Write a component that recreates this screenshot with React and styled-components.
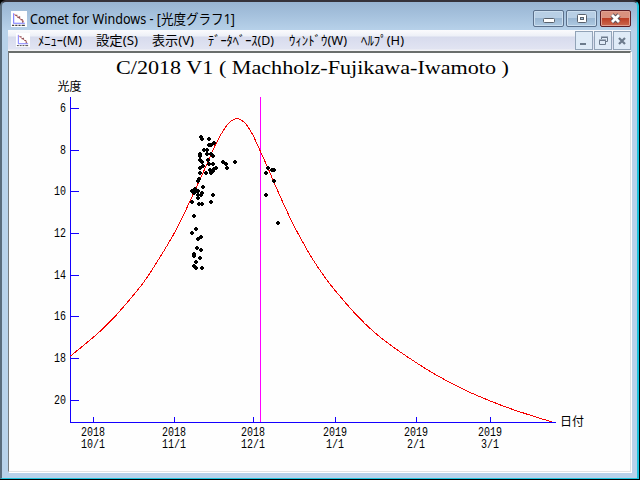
import React from "react";
import styled, { createGlobalStyle } from "styled-components";

const Global = createGlobalStyle`
  * { box-sizing: border-box; }
  body { margin: 0; background: #10141c; overflow: hidden; }
`;

const UI_FONT = `"Noto Sans", "Noto Sans CJK JP", sans-serif`;

const Desktop = styled.div`
  width: 640px;
  height: 480px;
  background: #000;
  padding: 0 1px 1px 0;
`;
const Frame = styled.div`
  width: 639px;
  height: 479px;
  display: flex;
  flex-direction: column;
  padding: 0 6px 6px 6px;
  border: 1px solid #1fc3dc;
  border-width: 2px 2px 1px 2px;
  border-top-color: #35323a;
  border-left-color: #5a6c7c;
  border-radius: 6px 6px 0 0;
  background: linear-gradient(#98b4d2 0, #a4c0dc 12px, #b8d2ea 29px);
`;
const TitleBar = styled.header`
  display: flex;
  align-items: center;
  height: 28px;
  flex: none;
  padding: 5px 0 0 3px;
`;
const Title = styled.h1`
  margin: 0 auto 0 3px;
  font: 400 14px/20px ${UI_FONT};
  color: #10141c;
  white-space: nowrap;
`;
const CaptionButton = styled.div`
  width: 31px;
  height: 17px;
  margin: -1px 0 0 ${(p) => p.$gap || 0}px;
  border: 1px solid ${(p) => (p.$close ? "#5c1c24" : "#5b708b")};
  border-radius: 2px;
  box-shadow: inset 0 0 0 1px ${(p) => (p.$close ? "#e0a092" : "#cbdeef")};
  background: ${(p) =>
    p.$close
      ? "linear-gradient(#d9917f 0 45%, #bb3a22 46%, #cb6a51)"
      : "linear-gradient(#b8cfe5 0 45%, #98b5d1 46%, #afcae2)"};
  svg { display: block; }
`;
const MenuBar = styled.nav`
  display: flex;
  height: 21px;
  flex: none;
  padding-left: 8px;
  background: linear-gradient(#fbfbfd 0, #edf0f7 6px, #d7dbed 7px, #e1e4f2 19px, #f2f2f5 20px);
`;
const MenuIcon = styled.div`
  width: 14px;
  padding-top: 3px;
`;
const MenuItems = styled.div`
  flex: 1;
`;
const MdiButton = styled.div`
  width: 18px;
  height: 19px;
  margin: 1px 0 0 1px;
  border: 1px solid #91a3b7;
  background: #dfebf7;
  svg { display: block; }
`;
const Client = styled.main`
  flex: 1;
  border: 1px solid #e1e3e3;
  border-top: 2px solid #6a6e6c;
  border-left: 1px solid #777c80;
  box-shadow: 1px 1px 0 #fff;
  background: #fefefe;
  overflow: hidden;
`;

const AppIcon = ({ size }) => (
  <svg width={size} height={size} viewBox="0 0 15 15">
    <rect width="15" height="15" fill="#fefeff" />
    <path d="M2.5 2v9.5H13" fill="none" stroke="#7777ff" />
    <path d="M3 3l9 7" stroke="#ef8b8b" strokeWidth="1" />
    <path d="M4 4h2M6 6h2M8 5v2M9 8h2M11 9v2" stroke="#8d5b60" strokeWidth="1.2" />
    <path d="M1 13.5h2M4 13.5h2M7 13.5h2M10 13.5h3" stroke="#444" />
  </svg>
);

const MENUS = [
  [44, "ﾒﾆｭｰ(M)"],
  [42, "設定(S)"],
  [42, "表示(V)"],
  [66, "ﾃﾞｰﾀﾍﾞｰｽ(D)"],
  [58, "ｳｨﾝﾄﾞｳ(W)"],
  [43, "ﾍﾙﾌﾟ(H)"],
];
const MenuLabels = styled.div`
  display: grid;
  grid-template-columns: 58px 56px 56px 81px 72px 50px;
  padding-left: 8px;
`;
const Label = styled.svg`
  display: block;
  overflow: visible;
  font: 400 13px ${UI_FONT};
`;

const CURVE = [
  [70.5, 356], [96, 335], [112.7, 319], [129.3, 300], [142.7, 283.5], [155.3, 264.7],
  [172.7, 236], [182.7, 216.5], [191.3, 198.3], [199.3, 180.7], [207.3, 163.3],
  [216, 143.5], [226, 126.5], [231.7, 120.7], [236.7, 118.6], [241, 119.8], [246, 124.2],
  [252.7, 134.7], [260.3, 151.2], [267.7, 167.5], [276, 187], [285.7, 208.5],
  [292.7, 223.3], [302.7, 242], [312, 258.2], [325, 277.4], [335.7, 291.2],
  [356.7, 315.3], [374.3, 332.3], [391.7, 346], [416.3, 362.7], [436.7, 375.3],
  [463.3, 389.3], [490.3, 401], [516.7, 410.8], [552, 422],
];
// Catmull-Rom spline through the light-curve samples
const curvePath = CURVE.slice(0, -1).reduce((d, p1, i) => {
  const p0 = CURVE[i - 1] || p1;
  const p2 = CURVE[i + 1];
  const p3 = CURVE[i + 2] || p2;
  const a = [p1[0] + (p2[0] - p0[0]) / 6, p1[1] + (p2[1] - p0[1]) / 6];
  const b = [p2[0] - (p3[0] - p1[0]) / 6, p2[1] - (p3[1] - p1[1]) / 6];
  return `${d}C${a} ${b} ${p2}`;
}, `M${CURVE[0]}`);

const OBSERVATIONS = [
  [201, 137], [202, 139], [209, 139], [214, 143], [209, 145], [211, 145], [204, 150], [207, 150],
  [207, 154], [200, 154], [200, 156], [211, 154], [213, 156], [200, 160], [202, 162], [208, 160],
  [209, 164], [213, 164], [200, 168], [203, 166], [223, 162], [226, 164], [227, 168], [235, 162],
  [200, 173], [206, 173], [210, 170], [211, 173], [213, 171], [216, 168], [214, 169], [211, 171],
  [199, 179], [198, 181], [203, 187], [213, 195], [192, 191], [195, 189], [196, 191], [194, 193],
  [198, 191], [202, 193], [198, 195], [201, 195], [198, 198], [192, 202], [199, 204], [202, 204],
  [211, 202], [194, 216], [196, 229], [192, 233], [201, 237], [198, 239], [197, 248], [201, 250],
  [194, 254], [194, 256], [200, 258], [196, 262], [194, 266], [196, 268], [202, 268],
  [268, 168], [266, 173], [272, 170], [274, 170], [274, 181], [266, 195], [278, 223],
];

const Y_TICKS = [[6, 108], [8, 150], [10, 191], [12, 233], [14, 275], [16, 316], [18, 358], [20, 400]];
const X_TICKS = [
  [93, "2018", "10/1"], [174, "2018", "11/1"], [253, "2018", "12/1"],
  [335, "2019", "1/1"], [416, "2019", "2/1"], [490, "2019", "3/1"],
];

const ChartSvg = styled.svg`
  display: block;
  .title { font: 400 19px "Liberation Serif", serif; }
  .tick { font: 400 12.5px "Liberation Mono", monospace; }
  .axis { font: 400 12px "Noto Sans CJK JP", sans-serif; }
`;

const Chart = () => (
  <ChartSvg width="621" height="416" viewBox="9 53 621 416">
    <text className="title" x="116" y="74" textLength="393" lengthAdjust="spacingAndGlyphs">
      C/2018 V1 ( Machholz-Fujikawa-Iwamoto )
    </text>
    <text className="axis" x="57.5" y="91">光度</text>
    <text className="axis" x="560" y="426">日付</text>
    <g fill="#1400ff">
      <rect x="70" y="97" width="1" height="326" />
      <rect x="70" y="422" width="486" height="1" />
      {Y_TICKS.map(([v, y]) => <rect key={v} x="70" y={y} width="9" height="1" />)}
      {X_TICKS.map(([x]) => <rect key={x} x={x} y="417" width="1" height="5" />)}
    </g>
    <rect x="260" y="97" width="1" height="325" fill="#ff00ff" />
    <path d={curvePath} fill="none" stroke="#f50000" shapeRendering="crispEdges" />
    <g shapeRendering="crispEdges">
      {OBSERVATIONS.map(([x, y], i) => (
        <path key={i} d={`M${x - 1} ${y - 2}h2v1h1v2h-1v1h-2v-1h-1v-2h1z`} />
      ))}
    </g>
    {Y_TICKS.map(([v, y]) => {
      const width = String(v).length * 6;
      return (
        <text key={v} className="tick" x={66 - width} y={y + 4} textLength={width} lengthAdjust="spacingAndGlyphs">
          {v}
        </text>
      );
    })}
    {X_TICKS.map(([x, year, day]) => (
      <text key={x} className="tick">
        <tspan x={x - 12} y="436" textLength="24" lengthAdjust="spacingAndGlyphs">{year}</tspan>
        <tspan x={x + 12 - day.length * 6 - (day.length === 3 ? 3 : 0)} y="448" textLength={day.length * 6} lengthAdjust="spacingAndGlyphs">{day}</tspan>
      </text>
    ))}
  </ChartSvg>
);

export default function App() {
  return (
    <>
      <Global />
      <Desktop>
        <Frame>
          <TitleBar>
            <AppIcon size={16} />
            <Title>
              <Label width="206" height="20">
                <text x="0" y="15" fontSize="14" textLength="205" lengthAdjust="spacingAndGlyphs">Comet for Windows - [光度グラフ1]</text>
              </Label>
            </Title>
            <CaptionButton>
              <svg width="29" height="15"><rect x="9.5" y="7.5" width="11" height="4" rx="1" fill="#fff" stroke="#58616c" /></svg>
            </CaptionButton>
            <CaptionButton $gap={2}>
              <svg width="29" height="15"><rect x="10.5" y="3.5" width="9" height="8" rx="1" fill="#fff" stroke="#58616c" /><rect x="13.5" y="6.5" width="3" height="2" fill="#a6c3df" stroke="#58616c" /></svg>
            </CaptionButton>
            <CaptionButton $gap={3} $close>
              <svg width="29" height="15"><path d="M11 4l7 7M18 4l-7 7" stroke="#5c5058" strokeWidth="4.6" /><path d="M11 4l7 7M18 4l-7 7" stroke="#fff" strokeWidth="2.8" /></svg>
            </CaptionButton>
          </TitleBar>
          <MenuBar>
            <MenuIcon><AppIcon size={14} /></MenuIcon>
            <MenuItems>
              <MenuLabels>
                {MENUS.map(([w, label]) => (
                  <Label key={label} width={w} height="20">
                    <text x="0" y="14.500" textLength={w} lengthAdjust="spacingAndGlyphs">{label}</text>
                  </Label>
                ))}
              </MenuLabels>
            </MenuItems>
            <MdiButton><svg width="16" height="17"><path d="M4 12h6" stroke="#6c7b8c" strokeWidth="2" /></svg></MdiButton>
            <MdiButton><svg width="16" height="17" fill="none" stroke="#6c7b8c"><path d="M6.5 7V5.5h6v4H11M6 5h7M4.500 8.5h6v4h-6zM4 8h7" /></svg></MdiButton>
            <MdiButton><svg width="16" height="17"><path d="M5 6l6 6M11 6l-6 6" stroke="#6c7b8c" strokeWidth="2.2" /></svg></MdiButton>
          </MenuBar>
          <Client>
            <Chart />
          </Client>
        </Frame>
      </Desktop>
    </>
  );
}
